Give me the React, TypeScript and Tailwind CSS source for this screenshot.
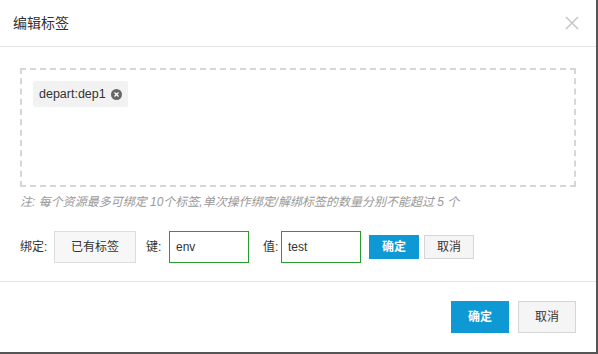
export default function App() {
  return (
    <div
      className="w-[598px] h-[354px] bg-[#555] overflow-hidden"
      style={{ fontFamily: '"Liberation Sans", "Noto Sans CJK SC", sans-serif' }}
    >
      <div className="w-[596px] h-[352px] bg-white flex flex-col">
        <div className="h-[47px] shrink-0 flex items-center justify-between pl-[13px] pr-[17px] border-b border-[#e5e5e5]">
          <span className="text-[14px] text-[#333]">编辑标签</span>
          <svg width="14" height="14" viewBox="0 0 14 14" className="text-[#c8c8c8]">
            <path d="M1 1L13 13M13 1L1 13" stroke="currentColor" strokeWidth="1.6" />
          </svg>
        </div>
        <div className="flex-1 px-[20px] pt-[21px]">
          <div className="h-[119px] border-2 border-dashed border-[#d6d6d6] px-[11px] pt-[11px]">
            <div className="inline-flex items-center gap-[5px] h-[26px] px-[6px] bg-[#f2f2f2] rounded-[2px]">
              <span className="text-[12.5px] text-[#333]">depart:dep1</span>
              <svg width="11" height="11" viewBox="0 0 12 12">
                <circle cx="6" cy="6" r="6" fill="#666" />
                <path d="M3.8 3.8L8.2 8.2M8.2 3.8L3.8 8.2" stroke="#fff" strokeWidth="1.4" />
              </svg>
            </div>
          </div>
          <p className="mt-[7px] text-[12px] italic text-[#999] leading-[17px]">
            注: 每个资源最多可绑定 10个标签,单次操作绑定/解绑标签的数量分别不能超过 5 个
          </p>
          <div className="mt-[20px] flex items-center text-[12px] text-[#333]">
            <span className="w-[34px]">绑定:</span>
            <div className="w-[82px] h-[32px] flex items-center justify-center bg-[#f7f7f7] border border-[#ddd]">
              已有标签
            </div>
            <span className="ml-[10px] w-[23px]">键:</span>
            <div className="w-[80px] h-[32px] flex items-center px-[6px] border border-[#2b9b2b]">env</div>
            <span className="ml-[14px] w-[18px]">值:</span>
            <div className="w-[80px] h-[32px] flex items-center px-[6px] border border-[#2b9b2b]">test</div>
            <div className="ml-[8px] w-[50px] h-[24px] flex items-center justify-center bg-[#0e99d5] text-white font-bold">
              确定
            </div>
            <div className="ml-[5px] w-[50px] h-[24px] flex items-center justify-center bg-[#f5f5f5] border border-[#d6d6d6]">
              取消
            </div>
          </div>
        </div>
        <div className="h-[71px] shrink-0 border-t border-[#e5e5e5] flex items-center justify-end gap-[9px] pr-[20px] text-[12px]">
          <div className="w-[58px] h-[32px] flex items-center justify-center bg-[#0e99d5] text-white font-bold">
            确定
          </div>
          <div className="w-[58px] h-[32px] flex items-center justify-center bg-[#f5f5f5] border border-[#d6d6d6] text-[#333]">
            取消
          </div>
        </div>
      </div>
    </div>
  );
}
